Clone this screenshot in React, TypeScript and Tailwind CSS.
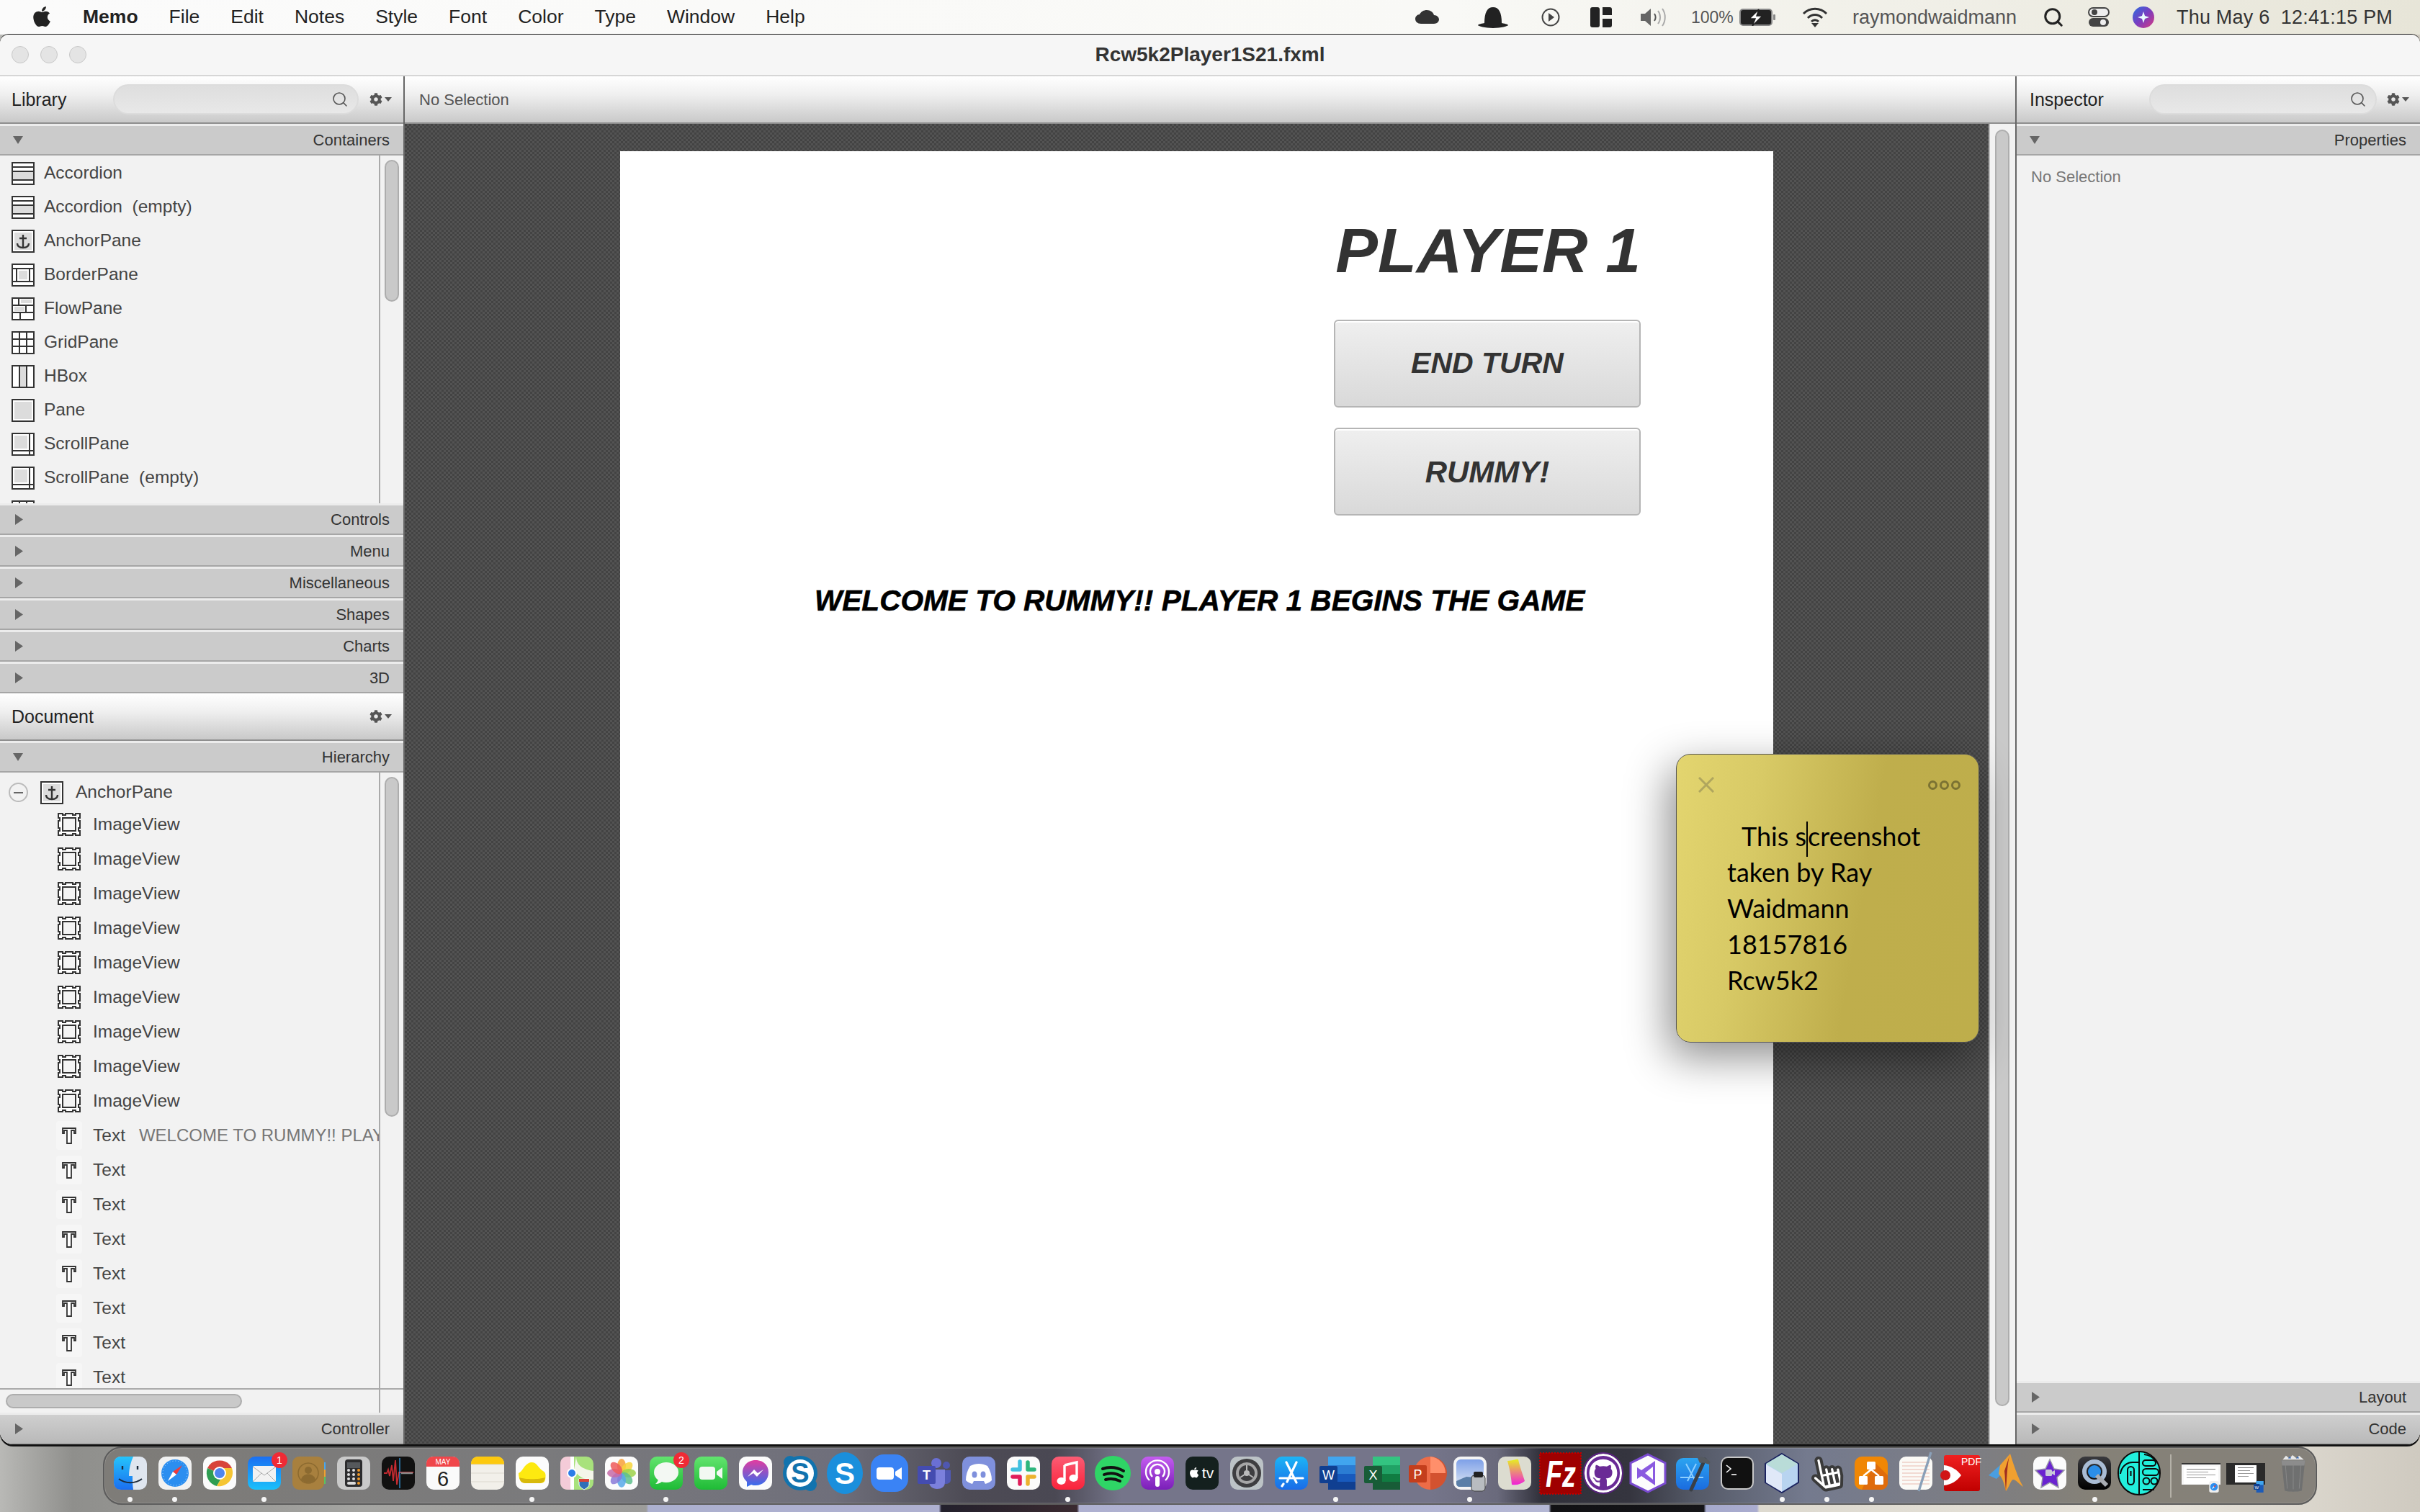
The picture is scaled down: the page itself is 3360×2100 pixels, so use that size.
import React from 'react';
import { Search } from 'lucide-react';
import { FaApple, FaCog, FaGithub, FaHandPointer } from 'react-icons/fa';

const Ic: React.FC<{ children: React.ReactNode }> = ({ children }) => (
  <svg viewBox="0 0 46 46" className="w-[46px] h-[46px] overflow-visible">{children}</svg>
);

const Grad: React.FC<{ id: string; a: string; b: string; h?: boolean }> = ({ id, a, b, h }) => (
  <defs>
    <linearGradient id={id} x1="0" y1="0" x2={h ? '1' : '0'} y2={h ? '0' : '1'}>
      <stop offset="0" stopColor={a} />
      <stop offset="1" stopColor={b} />
    </linearGradient>
  </defs>
);

const Sq: React.FC<{ fill: string; children?: React.ReactNode }> = ({ fill, children }) => (
  <Ic>
    <rect x="0" y="0" width="46" height="46" rx="10" fill={fill} />
    {children}
  </Ic>
);

const Petal: React.FC<{ r: number; c: string }> = ({ r, c }) => (
  <ellipse cx="23" cy="13" rx="6" ry="10" fill={c} opacity="0.85" transform={`rotate(${r} 23 23)`} />
);

const Office: React.FC<{ l: string; a: string; b: string; c: string; d: string }> = ({ l, a, b, c, d }) => (
  <Ic>
    <rect x="12" y="0" width="38" height="12" fill={a} />
    <rect x="12" y="12" width="38" height="12" fill={b} />
    <rect x="12" y="24" width="38" height="11" fill={c} />
    <rect x="12" y="35" width="38" height="11" fill={d} />
    <rect x="0" y="13" width="25" height="24" rx="2" fill={d} />
    <text x="12.5" y="32" textAnchor="middle" fontSize="18" fill="#fff" fontFamily="Liberation Sans">{l}</text>
  </Ic>
);

const dockIcons: { k: string; el: React.ReactNode; dot?: boolean; badge?: string }[] = [
  { k: 'finder', dot: true, el: (
    <Ic>
      <Grad id="fi" a="#25c4fb" b="#1b6ef0" />
      <rect width="46" height="46" rx="10" fill="#dfe6ef" />
      <path d="M10 0h17c-4 9-6 18-6 27h5c0 6 0 13 1 19H10C4 46 0 42 0 36V10C0 4 4 0 10 0z" fill="url(#fi)" />
      <path d="M12 13v5M33 13v5" stroke="#1c2a3a" strokeWidth="2.4" />
      <path d="M7 31c9 7 23 7 32 0" stroke="#1c2a3a" strokeWidth="2" fill="none" />
    </Ic>
  ) },
  { k: 'safari', dot: true, el: (
    <Sq fill="#f1f1f1">
      <circle cx="23" cy="23" r="19" fill="#2b8ef0" />
      <circle cx="23" cy="23" r="17" fill="none" stroke="#bfe0ff" strokeWidth="1" strokeDasharray="1 3" />
      <path d="M33 12 20 21l5 4z" fill="#ef3b3b" />
      <path d="M13 34l7-13 5 4z" fill="#fff" />
    </Sq>
  ) },
  { k: 'chrome', el: (
    <Sq fill="#fbfbfb">
      <path d="M6 16a19 19 0 0 1 34 0H23a8 8 0 0 0-8 4z" fill="#d8433a" />
      <path d="M6 16a19 19 0 0 0 13 25l8-14a8 8 0 0 1-12-7z" fill="#2f9e52" />
      <path d="M40 16a19 19 0 0 1-21 25l8-14a8 8 0 0 0-4-11z" fill="#f5c533" />
      <circle cx="23" cy="23" r="9" fill="#fff" />
      <circle cx="23" cy="23" r="7" fill="#4f86ec" />
    </Sq>
  ) },
  { k: 'mail', dot: true, badge: '1', el: (
    <Ic>
      <Grad id="ma" a="#1b6ff2" b="#1bc1fb" />
      <rect width="46" height="46" rx="10" fill="url(#ma)" />
      <rect x="7" y="13" width="32" height="22" rx="2" fill="#f2f2f2" />
      <path d="M7 14l16 12 16-12M7 35l12-12M39 35 27 23" stroke="#a9a9a9" strokeWidth="1" fill="none" />
    </Ic>
  ) },
  { k: 'contacts', el: (
    <Ic>
      <rect x="42" y="8" width="4" height="10" fill="#4aa8ee" />
      <rect x="42" y="18" width="4" height="10" fill="#f0a030" />
      <rect x="42" y="28" width="4" height="10" fill="#58c460" />
      <rect width="44" height="46" rx="9" fill="#a8803e" />
      <circle cx="22" cy="23" r="14" fill="none" stroke="#8c6a30" strokeWidth="1.5" />
      <circle cx="22" cy="19" r="5" fill="#8c6a30" />
      <path d="M12 32c2-10 18-10 20 0a14 14 0 0 1-20 0z" fill="#8c6a30" />
    </Ic>
  ) },
  { k: 'calc', el: (
    <Sq fill="#c9c9c9">
      <rect x="11" y="4" width="24" height="38" rx="4" fill="#2c2c2e" />
      <rect x="14" y="8" width="18" height="8" fill="#55585c" />
      {[19, 25, 31].map(y => [16, 23, 30].map(x => <circle key={`${x}${y}`} cx={x} cy={y} r="2" fill={x === 30 ? '#f09a2a' : '#ddd'} />))}
      <rect x="14" y="35" width="12" height="4" rx="2" fill="#ddd" />
      <circle cx="30" cy="37" r="2" fill="#f09a2a" />
    </Sq>
  ) },
  { k: 'voice', el: (
    <Sq fill="#111">
      <path d="M3 23h4l2-5 2 9 3-15 2 22 3-29 2 34 3-17h20" stroke="#c42a30" strokeWidth="1.8" fill="none" />
      <path d="M27 23h16" stroke="#888" strokeWidth="2.5" />
      <path d="M25 2v42" stroke="#3ba4ee" strokeWidth="1.2" />
    </Sq>
  ) },
  { k: 'calendar', el: (
    <Ic>
      <rect width="46" height="46" rx="10" fill="#fafafa" />
      <path d="M0 14V10C0 4 4 0 10 0h26c6 0 10 4 10 10v4z" fill="#f0464a" />
      <text x="23" y="11" textAnchor="middle" fontSize="10" fill="#fff" fontFamily="Liberation Sans">MAY</text>
      <text x="23" y="41" textAnchor="middle" fontSize="29" fill="#222" fontFamily="Liberation Sans">6</text>
    </Ic>
  ) },
  { k: 'notes', el: (
    <Ic>
      <rect width="46" height="46" rx="10" fill="#f2f0ea" />
      <path d="M0 11V10C0 4 4 0 10 0h26c6 0 10 4 10 10v1z" fill="#fdc90e" />
      <path d="M0 11h46M0 23h46M0 35h46" stroke="#dcd9cf" strokeWidth="1" />
    </Ic>
  ) },
  { k: 'stickies', dot: true, el: (
    <Sq fill="#fcfcfc">
      <path d="M4 23c6-2 8-14 18-15 8 0 9 8 16 12 4 2 4 6 3 12-1 4-3 5-9 5H14c-6 0-10-5-10-14z" fill="#fde910" />
      <path d="M5 29c8 3 28 3 36 0-1 6-3 8-9 8H14c-6 0-8-3-9-8z" fill="#d8b90a" />
    </Sq>
  ) },
  { k: 'maps', el: (
    <Sq fill="#a8e27c">
      <path d="M0 10C0 4 4 0 10 0h8v46h-8C4 46 0 42 0 36z" fill="#f4cbd8" />
      <path d="M14 0h5v46h-5z" fill="#fff" />
      <path d="M22 0c0 14 12 18 24 20v12c-16 0-20-4-27-14z" fill="#f4f6ea" />
      <circle cx="16" cy="23" r="6" fill="#2c7de8" stroke="#fff" strokeWidth="2" />
      <path d="M26 31h14v7c0 4-4 6-7 8-3-2-7-4-7-8z" fill="#2f6fb8" stroke="#fff" />
      <rect x="26" y="31" width="14" height="4" fill="#d8433a" />
    </Sq>
  ) },
  { k: 'photos', el: (
    <Sq fill="#fcfcfc">
      <Petal r={0} c="#f7a03a" />
      <Petal r={45} c="#f7d33a" />
      <Petal r={90} c="#9ed24a" />
      <Petal r={135} c="#5ec08c" />
      <Petal r={180} c="#58a8e8" />
      <Petal r={225} c="#8a7ad8" />
      <Petal r={270} c="#c66aa8" />
      <Petal r={315} c="#ee5a5a" />
    </Sq>
  ) },
  { k: 'messages', dot: true, badge: '2', el: (
    <Ic>
      <Grad id="me" a="#62e46e" b="#1fbb36" />
      <rect width="46" height="46" rx="10" fill="url(#me)" />
      <ellipse cx="23" cy="22" rx="17" ry="14" fill="#f3f8f3" />
      <path d="M12 30c0 4-2 6-4 8 5 0 8-2 10-4z" fill="#f3f8f3" />
    </Ic>
  ) },
  { k: 'facetime', el: (
    <Ic>
      <Grad id="ft" a="#62e46e" b="#1fbb36" />
      <rect width="46" height="46" rx="10" fill="url(#ft)" />
      <rect x="7" y="14" width="22" height="18" rx="4" fill="#f2f8f2" />
      <path d="M31 21l8-6v16l-8-6z" fill="#f2f8f2" />
    </Ic>
  ) },
  { k: 'messenger', el: (
    <Sq fill="#fbfbfb">
      <Grad id="ms" a="#e23ca0" b="#2f6ff0" />
      <path d="M23 5C12 5 5 13 5 22c0 6 3 10 6 13v7l6-3c2 1 4 1 6 1 11 0 18-8 18-18S34 5 23 5z" fill="url(#ms)" />
      <path d="M12 28l9-10 5 5 8-5-9 10-5-5z" fill="#fff" />
    </Sq>
  ) },
  { k: 'skype1', el: (
    <Ic>
      <circle cx="23" cy="23" r="24" fill="#1173ae" />
      <circle cx="9" cy="8" r="9" fill="#1173ae" />
      <circle cx="37" cy="39" r="9" fill="#1173ae" />
      <circle cx="23" cy="23" r="19" fill="#fff" />
      <text x="23" y="36" textAnchor="middle" fontSize="38" fontWeight="700" fill="#1173ae" fontFamily="Liberation Sans">S</text>
    </Ic>
  ) },
  { k: 'skype2', el: (
    <Ic>
      <ellipse cx="23" cy="23" rx="25" ry="29" fill="#1a8fdc" />
      <text x="23" y="38" textAnchor="middle" fontSize="42" fontWeight="700" fill="#fff" fontFamily="Liberation Sans">S</text>
    </Ic>
  ) },
  { k: 'zoom', el: (
    <Ic>
      <rect x="-3" y="-3" width="52" height="52" rx="18" fill="#3a83f5" />
      <rect x="5" y="15" width="24" height="17" rx="4" fill="#fff" />
      <path d="M31 21l9-6v17l-9-6z" fill="#fff" />
    </Ic>
  ) },
  { k: 'teams', el: (
    <Ic>
      <circle cx="26" cy="9" r="7" fill="#6a6fd4" />
      <circle cx="40" cy="12" r="5" fill="#4f57b0" />
      <path d="M16 18h22v18c0 6-5 9-11 9s-11-4-11-9z" fill="#7b80dc" />
      <path d="M38 19h8v13c0 4-3 6-8 6z" fill="#5059b4" />
      <rect x="0" y="13" width="25" height="25" rx="2" fill="#444cb0" />
      <text x="12.5" y="32" textAnchor="middle" fontSize="18" fontWeight="700" fill="#fff" fontFamily="Liberation Sans">T</text>
    </Ic>
  ) },
  { k: 'discord', el: (
    <Sq fill="#7f90dc">
      <path d="M11 13c8-4 16-4 24 0 4 6 6 13 6 20-3 3-6 4-9 5l-2-4H16l-2 4c-3-1-6-2-9-5 0-7 2-14 6-20z" fill="#fff" />
      <ellipse cx="17" cy="25" rx="3.5" ry="4.5" fill="#7f90dc" />
      <ellipse cx="29" cy="25" rx="3.5" ry="4.5" fill="#7f90dc" />
    </Sq>
  ) },
  { k: 'slack', el: (
    <Sq fill="#fbfbfb">
      <path d="M18 7v10M8 18h10" stroke="#41c0e0" strokeWidth="5.5" strokeLinecap="round" />
      <path d="M29 8v10M29 18h9" stroke="#2eb67d" strokeWidth="5.5" strokeLinecap="round" />
      <path d="M8 28h10M18 28v10" stroke="#e01e5a" strokeWidth="5.5" strokeLinecap="round" />
      <path d="M29 28v10M29 28h9" stroke="#ecb22e" strokeWidth="5.5" strokeLinecap="round" />
    </Sq>
  ) },
  { k: 'music', dot: true, el: (
    <Ic>
      <Grad id="mu" a="#fb5c74" b="#fa233b" />
      <rect width="46" height="46" rx="10" fill="url(#mu)" />
      <path d="M18 12l17-4v22" stroke="#fff" strokeWidth="3.4" fill="none" />
      <path d="M18 12v22" stroke="#fff" strokeWidth="3.4" />
      <ellipse cx="13.5" cy="34" rx="6" ry="5" fill="#fff" />
      <ellipse cx="30.5" cy="30" rx="6" ry="5" fill="#fff" />
    </Ic>
  ) },
  { k: 'spotify', el: (
    <Ic>
      <ellipse cx="23" cy="23" rx="25" ry="24" fill="#2fd566" />
      <path d="M9 17c9-3 20-2 29 3M11 25c8-3 17-2 25 3M13 32c7-2 14-1 20 2" stroke="#111" strokeWidth="4" strokeLinecap="round" fill="none" />
    </Ic>
  ) },
  { k: 'podcasts', el: (
    <Ic>
      <Grad id="po" a="#c45cf0" b="#7a1fb8" />
      <rect width="46" height="46" rx="10" fill="url(#po)" />
      <path d="M12 33a16 16 0 1 1 22 0M16 28a10 10 0 1 1 14 0" stroke="#fff" strokeWidth="2.4" fill="none" />
      <circle cx="23" cy="21" r="4" fill="#fff" />
      <rect x="20" y="27" width="6" height="15" rx="3" fill="#fff" />
    </Ic>
  ) },
  { k: 'tv', el: (
    <Sq fill="#14201e">
      <g transform="translate(6 14) scale(0.032)"><path fill="#fff" d="M318 268c0-37 17-64 51-85-19-27-48-42-86-45-36-3-76 21-90 21-15 0-50-20-77-20C60 140 0 184 0 273c0 26 5 53 15 81 13 37 60 128 109 127 26-1 44-18 77-18 32 0 49 18 77 18 50-1 92-83 104-120-67-32-64-92-64-93zM261 103c27-33 25-62 24-73-24 1-52 16-68 35-18 20-28 44-26 71 26 2 50-11 70-33z" /></g>
      <text x="31" y="30" textAnchor="middle" fontSize="21" fill="#fff" fontFamily="Liberation Sans">tv</text>
    </Sq>
  ) },
  { k: 'sysprefs', el: (
    <Sq fill="#bcc3c6">
      <circle cx="23" cy="23" r="20" fill="#3e3e40" />
      <circle cx="23" cy="23" r="15" fill="#a6a6a6" />
      <circle cx="23" cy="23" r="11" fill="#3e3e40" />
      <circle cx="23" cy="23" r="4" fill="#bbb" />
      <path d="M23 12v7M14 29l6-4M32 29l-6-4" stroke="#bbb" strokeWidth="2" />
    </Sq>
  ) },
  { k: 'appstore', el: (
    <Ic>
      <Grad id="ap" a="#1cb4f5" b="#1a6ce8" />
      <rect width="46" height="46" rx="10" fill="url(#ap)" />
      <path d="M16 8l14 28M30 8 17 35M7 30h32M12 38l-2 3" stroke="#fff" strokeWidth="3.2" strokeLinecap="round" />
    </Ic>
  ) },
  { k: 'word', dot: true, el: <Office l="W" a="#41a5ee" b="#2b7cd3" c="#185abd" d="#103f91" /> },
  { k: 'excel', el: <Office l="X" a="#33c481" b="#21a366" c="#107c41" d="#185c37" /> },
  { k: 'ppt', el: (
    <Ic>
      <path d="M30 0a23 23 0 0 1 0 46z" fill="#d35230" />
      <path d="M30 0a23 23 0 0 1 21 23H30z" fill="#ff8f6b" />
      <path d="M30 0a23 23 0 0 0 0 46z" fill="#ed6c47" />
      <rect x="0" y="12" width="25" height="24" rx="2" fill="#c43e1c" />
      <text x="12.5" y="31" textAnchor="middle" fontSize="18" fill="#fff" fontFamily="Liberation Sans">P</text>
    </Ic>
  ) },
  { k: 'preview', dot: true, el: (
    <Sq fill="#f5f5f5">
      <Grad id="pr" a="#7ea0e8" b="#dfe8f4" />
      <rect x="4" y="4" width="38" height="38" rx="6" fill="url(#pr)" />
      <path d="M4 34l14-6 24 2v8c0 2-2 4-4 4H8c-2 0-4-2-4-4z" fill="#5b7fa8" />
      <rect x="25" y="26" width="19" height="22" rx="4" fill="#b8bcc0" stroke="#444" />
      <rect x="28" y="21" width="13" height="8" rx="2" fill="#222" />
    </Sq>
  ) },
  { k: 'ribbon', el: (
    <Ic>
      <Grad id="ri" a="#e6f020" b="#f020d8" />
      <rect width="46" height="46" rx="10" fill="#dcdcd0" />
      <path d="M13 6c8 0 12-3 15-2 2 10 6 20 9 30-5 4-10 6-18 5-1-12-3-22-6-33z" fill="url(#ri)" />
    </Ic>
  ) },
  { k: 'filezilla', el: (
    <Ic>
      <rect x="-3" y="-5" width="57" height="57" fill="#9f0000" stroke="#bf0000" strokeWidth="2" strokeDasharray="2 2" />
      <text x="5" y="42" fontSize="52" fontWeight="700" fontStyle="italic" fill="#fff" fontFamily="Liberation Sans" textLength="42" lengthAdjust="spacingAndGlyphs">Fz</text>
    </Ic>
  ) },
  { k: 'github', el: (
    <div className="w-[52px] h-[54px] -mx-[3px] -my-[4px] rounded-full bg-[#6a2a96] border-[3px] border-[#fff] outline-[2px] outline-[#5a2280] flex items-center justify-center overflow-hidden">
      <FaGithub className="text-white w-[40px] h-[40px]" />
    </div>
  ) },
  { k: 'vs', el: (
    <Ic>
      <path d="M23 -3 47 9v28L23 49-1 37V9z" fill="#fdfdfd" stroke="#7a4ad0" strokeWidth="3" />
      <path d="M33 6v34l-19-13-6 4V15l6 4z" fill="#8a5ae0" />
      <path d="M30 14v18l-11-9z" fill="#fdfdfd" />
    </Ic>
  ) },
  { k: 'xcode', el: (
    <Ic>
      <Grad id="xc" a="#2ca4f0" b="#1a6ce0" />
      <rect y="2" width="46" height="44" rx="10" fill="url(#xc)" />
      <path d="M14 10l14 26M28 10 16 34M6 29h32" stroke="#8ccfff" strokeWidth="2" />
      <path d="M40 4 21 46" stroke="#3a3f45" strokeWidth="5" strokeLinecap="round" />
      <path d="M30 2c6-3 12-1 18 6l-3 3c-5-3-9-3-12-2z" fill="#555a60" />
    </Ic>
  ) },
  { k: 'terminal', el: (
    <Sq fill="#c8c8c8">
      <rect x="2" y="2" width="42" height="42" rx="8" fill="#111" />
      <path d="M8 12l6 5-6 5" stroke="#fff" strokeWidth="1.6" fill="none" />
      <path d="M15 25h7" stroke="#fff" strokeWidth="1.6" />
    </Sq>
  ) },
  { k: 'vbox', dot: true, el: (
    <Ic>
      <path d="M23 -4 46 10v26L23 50 0 36V10z" fill="#b8d4f0" stroke="#1c2460" strokeWidth="2" />
      <path d="M23 -3 45 10 23 23 1 10z" fill="#b9dcd8" />
      <path d="M23 24v25L1 36V11z" fill="#e0e8f8" />
    </Ic>
  ) },
  { k: 'hand', dot: true, el: (
    <FaHandPointer className="w-[44px] h-[46px] text-white -rotate-12 [stroke:#3a3a3a] [stroke-width:44px] overflow-visible" />
  ) },
  { k: 'drawio', dot: true, el: (
    <Sq fill="#f08705">
      <path d="M46 26 28 8 10 46h26c6 0 10-4 10-10z" fill="#df6c0c" />
      <rect x="17" y="7" width="12" height="11" rx="1.5" fill="#fff" />
      <rect x="6" y="27" width="12" height="12" rx="1.5" fill="#fff" />
      <rect x="28" y="27" width="12" height="12" rx="1.5" fill="#fff" />
      <path d="M23 18l-11 9M23 18l11 9" stroke="#fff" strokeWidth="2.4" />
    </Sq>
  ) },
  { k: 'textedit', el: (
    <Ic>
      <rect width="46" height="46" rx="9" fill="#fbfaf6" />
      {[8, 13, 18, 23, 28, 33, 38].map(y => <path key={y} d={`M4 ${y}h38`} stroke="#e8b9ae" strokeWidth="1" />)}
      <path d="M44 -6 27 48" stroke="#8aa0b8" strokeWidth="3.4" />
    </Ic>
  ) },
  { k: 'pdf', el: (
    <Ic>
      <Grad id="pd" a="#f02020" b="#c00000" />
      <rect y="-2" width="50" height="50" rx="3" fill="url(#pd)" />
      <path d="M0 12c10 1 18 6 24 14-6 8-14 13-24 14z" fill="#fff" />
      <circle cx="2" cy="26" r="7" fill="#d01515" />
      <text x="38" y="12" textAnchor="middle" fontSize="14" fill="#fff" fontFamily="Liberation Sans">PDF</text>
    </Ic>
  ) },
  { k: 'matlab', el: (
    <Ic>
      <path d="M0 26 16 12l6 8-11 11z" fill="#4a9ee0" />
      <path d="M16 12 30 -4c5 16 10 32 18 46-6-4-10-10-14-10-3 0-6 12-10 16-2-8-4-18-10-24z" fill="#f0a030" />
      <path d="M22 20l8-24c-4 12-4 26-6 52-1-10-1-20-2-28z" fill="#a03020" />
    </Ic>
  ) },
  { k: 'imovie', el: (
    <Sq fill="#fbfbfb">
      <path d="M23 4l6 13 14 2-10 10 2 14-12-7-12 7 2-14L3 19l14-2z" fill="#6a24d0" stroke="#9a9aa8" strokeWidth="1.5" />
      <rect x="17" y="18" width="9" height="9" rx="1.5" fill="#c8c8d8" />
      <path d="M26 21l4-2v7l-4-2z" fill="#c8c8d8" />
    </Sq>
  ) },
  { k: 'quicktime', dot: true, el: (
    <Ic>
      <Grad id="qt" a="#3a3a3e" b="#000" />
      <rect width="46" height="46" rx="10" fill="url(#qt)" />
      <circle cx="23" cy="21" r="14" fill="none" stroke="#a9bcd4" strokeWidth="6" />
      <circle cx="23" cy="21" r="9" fill="#2a8ee8" />
      <path d="M26 26l14 14" stroke="#a8acb2" strokeWidth="6" />
    </Ic>
  ) },
  { k: 'brain', el: (
    <Ic>
      <ellipse cx="23" cy="23" rx="29" ry="30" fill="#22efdc" stroke="#0a0a0a" strokeWidth="2" />
      <path d="M23 -6v14H14C4 8 -2 16 -3 24M23 8v44M30 -3c8 1 12 4 17 10M28 46h16" stroke="#0a0a0a" strokeWidth="2" fill="none" />
      <rect x="7" y="14" width="9" height="25" rx="4.5" fill="none" stroke="#0a0a0a" strokeWidth="2" />
      <path d="M11.5 20v7" stroke="#0a0a0a" strokeWidth="2" />
      <rect x="28" y="17" width="22" height="9" rx="4.5" fill="none" stroke="#0a0a0a" strokeWidth="2" />
      <circle cx="33" cy="34" r="4.5" fill="none" stroke="#0a0a0a" strokeWidth="2" />
      <circle cx="44" cy="34" r="4.5" fill="none" stroke="#0a0a0a" strokeWidth="2" />
      <rect x="28" y="5" width="18" height="8" rx="4" fill="none" stroke="#0a0a0a" strokeWidth="2" />
    </Ic>
  ) },
];

const MiniDoc: React.FC<{ dark?: boolean; children: React.ReactNode }> = ({ dark, children }) => (
  <div className="relative w-[54px] h-[41px]">
    <div className={`h-[30px] w-[54px] flex justify-center ${dark ? 'bg-[#2a2a2a]' : 'bg-[#f6f6f6] border-t-[2px] border-[#333]'}`}>
      <div className={`bg-white h-[24px] mt-[3px] ${dark ? 'w-[30px]' : 'w-[48px]'} flex flex-col gap-[3px] pt-[3px] px-[4px]`}>
        <div className="h-[1px] bg-[#777] w-full" />
        <div className="h-[1px] bg-[#999] w-3/4" />
        <div className="h-[1px] bg-[#999] w-full" />
        <div className="h-[1px] bg-[#999] w-2/3" />
      </div>
    </div>
    <div className="absolute right-0 top-[25px] w-[18px] h-[16px]">{children}</div>
  </div>
);

const Dock: React.FC = () => (
  <div className="ml-[143px] mt-[3px] w-[3074px] h-[81px] flex pl-[5px] rounded-[26px] border-2 border-[#5c5c5c] shadow-[inset_0_0_0_1px_rgba(255,255,255,0.15)] bg-[linear-gradient(90deg,#7e7c78_0%,#7a7a7c_20%,#6f6f7b_33%,#4d4b55_39%,#4a4853_43%,#75758a_46%,#75758a_60%,#6a6a7c_63%,#30303a_65%,#35353f_69%,#555a68_72%,#747a8e_77%,#7c7d84_84%,#858177_90%,#85817a_100%)]">
    {dockIcons.map(d => (
      <div key={d.k} className="relative w-[62px] h-full flex flex-col items-center pt-[12px]">
        <div className="relative w-[46px] h-[46px] flex items-center justify-center">
          {d.el}
          {d.badge && (
            <span className="absolute right-[-9px] top-[-6px] w-[22px] h-[22px] rounded-full bg-[#f02a35] text-white text-[14px] leading-[22px] text-center">{d.badge}</span>
          )}
        </div>
        {d.dot && <span className="mt-[10px] w-[7px] h-[7px] rounded-full bg-[#f5f5f5]" />}
      </div>
    ))}
    <div className="ml-[12px] mt-[9px] mb-[8px] w-[2px] bg-[#b4b1a8]" />
    <div className="ml-[14px] w-[62px] pt-[21px]">
      <MiniDoc>
        <svg viewBox="0 0 20 24" className="w-full h-full">
          <rect width="20" height="24" rx="4" fill="#eee" />
          <circle cx="10" cy="12" r="8" fill="#2b8ef0" />
          <path d="M15 7 9 11l2 2z" fill="#ef3b3b" />
          <path d="M5 17l4-6 2 2z" fill="#fff" />
        </svg>
      </MiniDoc>
    </div>
    <div className="w-[62px] pt-[21px]">
      <MiniDoc dark>
        <svg viewBox="0 0 20 24" className="w-full h-full">
          <rect x="5" width="15" height="24" fill="#1c5bb8" />
          <rect x="5" width="15" height="8" fill="#41a5ee" />
          <rect y="6" width="12" height="12" fill="#103f91" />
          <text x="6" y="16" textAnchor="middle" fontSize="9" fill="#fff" fontFamily="Liberation Sans">W</text>
        </svg>
      </MiniDoc>
    </div>
    <div className="w-[62px] pt-[9px] flex justify-center">
      <svg viewBox="0 0 40 58" className="w-[40px] h-[53px]">
        <path d="M2 9h36l-5 46c-1 2-25 2-26 0z" fill="#6f7070" />
        <path d="M2 9h36l-1 8H3z" fill="#8c8c8c" />
        <path d="M8 14l3 38M20 14v39M32 14l-3 38" stroke="#8a8a8a" strokeWidth="1" />
        <path d="M4 8l5-6 5 4 5-5 6 5 4-4 7 6z" fill="#e8e8e8" />
        <path d="M12 6l3-3 2 3zM24 6l3-3 2 3z" fill="#3a6ab8" />
      </svg>
    </div>
  </div>
);

const LibIcon: React.FC<{ kind: string }> = ({ kind }) => {
  const s = { stroke: '#333', strokeWidth: 2, fill: 'none' };
  return (
    <svg viewBox="0 0 32 32" className="w-[32px] h-[32px] shrink-0">
      <rect x="1" y="1" width="30" height="30" fill="#fff" {...{ stroke: '#333', strokeWidth: 2 }} />
      {kind === 'acc' && (
        <>
          <rect x="2" y="13" width="28" height="12" fill="#dcdcdc" />
          <path d="M1 7h30M1 13h30M1 25h30" {...s} />
        </>
      )}
      {kind === 'anchor' && (
        <>
          <rect x="4" y="4" width="24" height="24" fill="#dcdcdc" />
          <path d="M16 7v17M11 12h10M8 19c0 5 4 6 8 6s8-1 8-6" {...s} strokeWidth={2.4} />
        </>
      )}
      {kind === 'border' && (
        <>
          <path d="M1 7h30M1 25h30M7 7v18M25 7v18" {...s} />
          <rect x="10" y="10" width="12" height="12" fill="#dcdcdc" />
        </>
      )}
      {kind === 'flow' && (
        <>
          <path d="M1 11h30M1 21h30M10 1v10M20 11v10M12 21v10" {...s} />
          <rect x="4" y="13" width="14" height="6" fill="#dcdcdc" />
          <rect x="13" y="3" width="15" height="5" fill="#dcdcdc" />
        </>
      )}
      {kind === 'grid' && <path d="M1 11h30M1 21h30M11 1v30M21 1v30" {...s} />}
      {kind === 'hbox' && (
        <>
          <rect x="12" y="2" width="8" height="28" fill="#dcdcdc" />
          <path d="M11 1v30M21 1v30" {...s} />
        </>
      )}
      {kind === 'pane' && <rect x="4" y="4" width="24" height="24" fill="#dcdcdc" />}
      {kind === 'scroll' && (
        <>
          <rect x="4" y="4" width="18" height="18" fill="#dcdcdc" />
          <path d="M25 1v30M1 25h30" {...s} />
        </>
      )}
    </svg>
  );
};

const ImageViewIcon: React.FC = () => (
  <svg viewBox="0 0 32 32" className="w-[32px] h-[32px] shrink-0">
    <path d="M1 1h6v2h4V1h10v2h4V1h6v6h-2v4h2v10h-2v4h2v6h-6v-2h-4v2H11v-2H7v2H1v-6h2v-4H1V11h2V7H1z" fill="#fff" stroke="#333" strokeWidth="2" />
    <rect x="7" y="7" width="18" height="18" fill="#f4f4f4" stroke="#333" strokeWidth="2" />
  </svg>
);

const TextIcon: React.FC = () => (
  <div className="w-[36px] h-[40px] shrink-0 rounded-[4px] bg-[#f6f6f6] flex items-center justify-center">
    <svg viewBox="0 0 20 23" className="w-[20px] h-[23px]">
      <path d="M1 1h18v7h-2V4h-4v18H7V4H3v4H1z" fill="#fff" stroke="#333" strokeWidth="1.8" />
    </svg>
  </div>
);

const Down: React.FC = () => (
  <svg viewBox="0 0 14 11" className="w-[14px] h-[11px] ml-[18px]"><path d="M0 0h14L7 11z" fill="#666" /></svg>
);
const Right: React.FC = () => (
  <svg viewBox="0 0 11 15" className="w-[11px] h-[15px] ml-[21px]"><path d="M0 0l11 7.5L0 15z" fill="#666" /></svg>
);

const Band: React.FC<{ label: string; open?: boolean; fade?: boolean }> = ({ label, open, fade }) => (
  <div className={`h-[44px] shrink-0 flex items-center justify-between pr-[19px] border-t-[3px] border-t-[#ececec] border-b-2 border-b-[#a6a6a6] text-[22px] text-[#333] ${fade ? 'bg-[linear-gradient(180deg,#cfcfcf,#b9b9b9)]' : 'bg-[#cbcbcb]'}`}>
    {open ? <Down /> : <Right />}
    <span>{label}</span>
  </div>
);

const Gear: React.FC = () => (
  <div className="flex items-center gap-[3px] text-[#555]">
    <FaCog className="w-[18px] h-[18px]" />
    <svg viewBox="0 0 10 6" className="w-[10px] h-[6px]"><path d="M0 0h10L5 6z" fill="#555" /></svg>
  </div>
);

const SearchBox: React.FC<{ w: string }> = ({ w }) => (
  <div className={`${w} h-[42px] rounded-[21px] border-2 border-[#dcdcdc] flex items-center justify-end pr-[12px] bg-[linear-gradient(180deg,#dedede,#e8e8e8)]`}>
    <Search className="w-[24px] h-[24px] text-[#555]" strokeWidth={1.6} />
  </div>
);

const header = 'h-[66px] shrink-0 flex items-center border-b-2 border-[#8f8f8f] bg-[linear-gradient(180deg,#ffffff_0%,#efefef_40%,#c9c9c9_100%)]';

const Thumb: React.FC<{ h: string }> = ({ h }) => (
  <div className={`w-[20px] ${h} rounded-full border-2 border-[#adadad] bg-[#c9c9c9]`} />
);

const library: [string, string][] = [
  ['acc', 'Accordion'],
  ['acc', 'Accordion  (empty)'],
  ['anchor', 'AnchorPane'],
  ['border', 'BorderPane'],
  ['flow', 'FlowPane'],
  ['grid', 'GridPane'],
  ['hbox', 'HBox'],
  ['pane', 'Pane'],
  ['scroll', 'ScrollPane'],
  ['scroll', 'ScrollPane  (empty)'],
  ['grid', ''],
];

const LeftPanel: React.FC = () => (
  <div className="w-[560px] shrink-0 flex flex-col bg-[#f2f2f2]">
    <div className={`${header} px-[16px] justify-between`}>
      <span className="mt-[2px] text-[25px] text-[#222]">Library</span>
      <div className="flex items-center gap-[15px]">
        <SearchBox w="w-[341px]" />
        <Gear />
      </div>
    </div>
    <Band label="Containers" open />
    <div className="h-[483px] shrink-0 flex overflow-hidden">
      <div className="w-[528px] border-r-2 border-[#aaa] overflow-hidden pt-[1px]">
        {library.map(([kind, label], i) => (
          <div key={i} className="h-[47px] flex items-center gap-[13px] pl-[16px] text-[24.5px] text-[#444] whitespace-pre">
            <LibIcon kind={kind} />
            <span>{label}</span>
          </div>
        ))}
      </div>
      <div className="flex-1 pt-[6px] pl-[6px]"><Thumb h="h-[197px]" /></div>
    </div>
    {['Controls', 'Menu', 'Miscellaneous', 'Shapes', 'Charts', '3D'].map(l => <Band key={l} label={l} />)}
    <div className={`${header} px-[16px] justify-between`}>
      <span className="mt-[2px] text-[25px] text-[#222]">Document</span>
      <Gear />
    </div>
    <Band label="Hierarchy" open />
    <div className="flex-1 min-h-0 flex overflow-hidden">
      <div className="w-[528px] border-r-2 border-[#aaa] overflow-hidden pt-[4px] text-[24.5px] text-[#444]">
        <div className="h-[44px] flex items-center pl-[12px] pt-[3px]">
          <div className="w-[27px] h-[27px] rounded-full border-2 border-[#bbb] flex items-center justify-center">
            <div className="w-[13px] h-[2px] bg-[#666]" />
          </div>
          <div className="ml-[17px]"><LibIcon kind="anchor" /></div>
          <span className="ml-[17px]">AnchorPane</span>
        </div>
        {Array.from({ length: 9 }).map((_, i) => (
          <div key={i} className="h-[48px] flex items-center pl-[80px] gap-[17px]">
            <ImageViewIcon />
            <span>ImageView</span>
          </div>
        ))}
        {Array.from({ length: 8 }).map((_, i) => (
          <div key={i} className="h-[48px] flex items-center pl-[78px] gap-[15px] whitespace-nowrap">
            <TextIcon />
            <span className="shrink-0">Text</span>
            {i === 0 && <span className="shrink-0 ml-[4px] text-[24px] text-[#777]">WELCOME TO RUMMY!! PLAYER 1 BEGINS THE GAME</span>}
          </div>
        ))}
      </div>
      <div className="flex-1 pt-[6px] pl-[6px]"><Thumb h="h-[472px]" /></div>
    </div>
    <div className="h-[34px] shrink-0 flex border-t-2 border-[#aaa]">
      <div className="w-[528px] border-r-2 border-[#aaa] pl-[8px] pt-[6px]">
        <div className="w-[328px] h-[20px] rounded-full border-2 border-[#adadad] bg-[#c9c9c9]" />
      </div>
    </div>
    <Band label="Controller" fade />
  </div>
);

const Canvas: React.FC = () => (
  <div className="flex-1 min-w-0 flex flex-col border-x-2 border-[#666]">
    <div className={`${header} px-[20px] text-[22px] text-[#555]`}><span className="mt-[1px]">No Selection</span></div>
    <div className="flex-1 min-h-0 flex">
      <div className="flex-1 min-w-0 overflow-hidden pl-[299px] pt-[38px] bg-[repeating-conic-gradient(#535353_0%_25%,#434343_0%_50%)] bg-[length:6px_6px]">
        <div className="w-[1601px] h-full bg-white flex flex-col text-[#333] italic">
          <div className="flex flex-col items-end pr-[184px] pt-[93px]">
            <div className="h-[90px] leading-[90px] text-[88px] font-bold">PLAYER 1</div>
            <button className="mt-[51px] w-[426px] h-[122px] rounded-[6px] border-2 border-[#b5b5b5] shadow-[inset_0_2px_0_#fff] bg-[linear-gradient(180deg,#efefef,#d9d9d9)] text-[41px] font-bold">END TURN</button>
            <button className="mt-[28px] w-[426px] h-[122px] rounded-[6px] border-2 border-[#b5b5b5] shadow-[inset_0_2px_0_#fff] bg-[linear-gradient(180deg,#efefef,#d9d9d9)] text-[42px] font-bold">RUMMY!</button>
          </div>
          <div className="mt-[93px] ml-[270px] h-[50px] leading-[50px] text-[40.6px] font-bold text-black whitespace-nowrap [-webkit-text-stroke:0.6px_black]">WELCOME TO RUMMY!! PLAYER 1 BEGINS THE GAME</div>
        </div>
      </div>
      <div className="w-[37px] shrink-0 border-l-2 border-[#bbb] bg-[#f2f2f2] pt-[8px] pl-[7px]">
        <Thumb h="h-[1773px]" />
      </div>
    </div>
  </div>
);

const RightPanel: React.FC = () => (
  <div className="w-[560px] shrink-0 flex flex-col bg-[#f2f2f2]">
    <div className={`${header} pl-[18px] pr-[15px] justify-between`}>
      <span className="mt-[2px] text-[25px] text-[#222]">Inspector</span>
      <div className="flex items-center gap-[14px]">
        <SearchBox w="w-[316px]" />
        <Gear />
      </div>
    </div>
    <Band label="Properties" open />
    <div className="flex-1 pl-[20px] pt-[13px] text-[22px] text-[#777]">No Selection</div>
    <Band label="Layout" />
    <Band label="Code" fade />
  </div>
);

const MenuBar: React.FC = () => (
  <div className="h-[48px] shrink-0 flex items-center text-[26.5px] text-[#222] bg-[linear-gradient(90deg,#fbfbfb_0%,#f9f9f6_60%,#e7e5d8_100%)]">
    <FaApple className="ml-[43px] w-[30px] h-[32px] text-[#222] -mt-[3px]" />
    <div className="ml-[42px] flex gap-[43px]">
      <span className="font-bold">Memo</span>
      {['File', 'Edit', 'Notes', 'Style', 'Font', 'Color', 'Type', 'Window', 'Help'].map(m => <span key={m}>{m}</span>)}
    </div>
    <div className="ml-auto flex items-center pr-[38px] text-[#333]">
      <svg viewBox="0 0 33 20" className="w-[33px] h-[20px]"><path d="M8 19C3 19 0 16 0 12c0-3 3-6 6-6 2-4 6-6 10-6 5 0 9 3 10 7 4 0 7 3 7 6s-3 6-7 6z" fill="#333" /></svg>
      <svg viewBox="0 0 44 30" className="ml-[53px] w-[44px] h-[30px]"><path d="M10 23C10 8 14 1 22 1s12 7 12 22c6 1 9 2 9 3s-10 4-21 4S1 27 1 26s3-2 9-3z" fill="#222" /></svg>
      <svg viewBox="0 0 26 26" className="ml-[45px] w-[26px] h-[26px]"><circle cx="13" cy="13" r="11.5" fill="none" stroke="#444" strokeWidth="2" /><path d="M10 7l8 6-8 6z" fill="#444" /></svg>
      <svg viewBox="0 0 30 28" className="ml-[42px] w-[30px] h-[28px]"><rect width="13" height="28" rx="3" fill="#222" /><path d="M17 0h10c2 0 3 1 3 3v8H17zM17 16h13v9c0 2-1 3-3 3H17z" fill="#222" /></svg>
      <svg viewBox="0 0 37 26" className="ml-[40px] w-[37px] h-[26px]"><path d="M0 8h6l8-7v24l-8-7H0z" fill="#666" /><path d="M19 8c2 3 2 7 0 10" stroke="#555" strokeWidth="2" fill="none" /><path d="M24 4c4 5 4 13 0 18M30 1c5 7 5 17 0 24" stroke="#aaa" strokeWidth="2" fill="none" /></svg>
      <span className="ml-[33px] w-[59px] text-[23px] text-[#555] whitespace-nowrap">100%</span>
      <svg viewBox="0 0 50 24" className="ml-[8px] w-[50px] h-[24px]"><rect x="1" y="1" width="44" height="22" rx="4" fill="#222" stroke="#888" strokeWidth="2" /><rect x="47" y="8" width="3" height="8" rx="1" fill="#888" /><path d="M27 1 14 14h8l-4 10 14-14h-8z" fill="#fff" stroke="#222" strokeWidth="1.5" /></svg>
      <svg viewBox="0 0 36 28" className="ml-[37px] w-[36px] h-[28px]"><path d="M2 9c9-9 23-9 32 0M8 15c6-6 14-6 20 0M13 20c3-3 7-3 10 0" stroke="#333" strokeWidth="3" fill="none" /><path d="M18 28l-5-6h10z" fill="#333" /></svg>
      <span className="ml-[34px] text-[27px] text-[#555] w-[228px] whitespace-nowrap">raymondwaidmann</span>
      <Search className="ml-[36px] w-[30px] h-[30px] text-[#222]" strokeWidth={2.4} />
      <svg viewBox="0 0 30 28" className="ml-[33px] w-[30px] h-[28px]"><rect x="1" y="1" width="28" height="12" rx="6" fill="#eee" stroke="#444" strokeWidth="2" /><circle cx="9" cy="7" r="4" fill="#444" /><rect x="1" y="15" width="28" height="12" rx="6" fill="#444" /><circle cx="21" cy="21" r="4" fill="#eee" /></svg>
      <svg viewBox="0 0 30 30" className="ml-[32px] w-[30px] h-[30px]">
        <defs><linearGradient id="si" x1="0" y1="0" x2="1" y2="1"><stop offset="0" stopColor="#2b6fe0" /><stop offset="0.5" stopColor="#7a3cc0" /><stop offset="1" stopColor="#d83a80" /></linearGradient></defs>
        <circle cx="15" cy="15" r="15" fill="url(#si)" />
        <path d="M15 7l2 6 6 2-6 2-2 6-2-6-6-2 6-2z" fill="#e8fbff" />
      </svg>
      <span className="ml-[31px] w-[300px] text-[27px] tracking-[0.2px] whitespace-pre">Thu May 6  12:41:15 PM</span>
    </div>
  </div>
);

const Sticky: React.FC = () => (
  <div className="absolute left-[2327px] top-[1047px] w-[421px] h-[401px] rounded-[20px] border border-[#555] bg-[linear-gradient(100deg,#e3d56f_0%,#d8ca66_25%,#bfae4c_60%,#beae4b_100%)] shadow-[-10px_20px_60px_rgba(0,0,0,0.45)] text-black font-['Lato',sans-serif] text-[36px] leading-[50px]">
    <div className="flex justify-between items-center pl-[30px] pr-[25px] pt-[31px]">
      <svg viewBox="0 0 22 22" className="w-[22px] h-[22px]"><path d="M1 1l20 20M21 1 1 21" stroke="#b0a65e" strokeWidth="3" /></svg>
      <div className="flex gap-[3px]">
        <span className="w-[13px] h-[13px] rounded-full border-[3px] border-[#7b7232]" />
        <span className="w-[13px] h-[13px] rounded-full border-[3px] border-[#7b7232]" />
        <span className="w-[13px] h-[13px] rounded-full border-[3px] border-[#7b7232]" />
      </div>
    </div>
    <div className="pl-[70px] pt-[35px] whitespace-pre">
      <div className="pl-[20px]">This s<span className="inline-block w-0 h-[49px] -my-[10px] border-l-2 border-black align-middle" />creenshot</div>
      <div>taken by Ray</div>
      <div>Waidmann</div>
      <div>18157816</div>
      <div>Rcw5k2</div>
    </div>
  </div>
);

export default function App() {
  return (
    <div className="relative w-[3360px] h-[2100px] overflow-hidden flex flex-col font-['Liberation_Sans',sans-serif] bg-[linear-gradient(90deg,#b9b9b6_0%,#8f8f8c_3%,#a4a4a1_15%,#9c9c9a_26.7%,#acb0cf_26.8%,#aeb0d0_38.8%,#23202c_38.9%,#3a2a30_44.5%,#aeb0d0_44.6%,#b4b7d4_64%,#111114_64.1%,#151518_70.4%,#a5a9cc_70.5%,#aaaccf_72.6%,#ddd9cf_72.7%,#e7e3da_90%,#cfcac0_100%)]">
      <MenuBar />
      <div className="h-[1958px] shrink-0 flex flex-col rounded-t-[12px] rounded-b-[18px] overflow-hidden shadow-[0_-1px_0_#111,0_3px_0_#111]">
        <div className="h-[58px] shrink-0 grid grid-cols-3 items-center bg-[#f6f6f6] border-b-2 border-[#d6d6d6]">
          <div className="flex gap-[16px] pl-[16px]">
            <span className="w-[24px] h-[24px] rounded-full bg-[#e4e4e4] border border-[#c8c8c8]" />
            <span className="w-[24px] h-[24px] rounded-full bg-[#e4e4e4] border border-[#c8c8c8]" />
            <span className="w-[24px] h-[24px] rounded-full bg-[#e4e4e4] border border-[#c8c8c8]" />
          </div>
          <div className="text-center text-[28px] font-bold text-[#333] whitespace-nowrap">Rcw5k2Player1S21.fxml</div>
        </div>
        <div className="flex-1 min-h-0 flex">
          <LeftPanel />
          <Canvas />
          <RightPanel />
        </div>
      </div>
      <Dock />
      <Sticky />
    </div>
  );
}
